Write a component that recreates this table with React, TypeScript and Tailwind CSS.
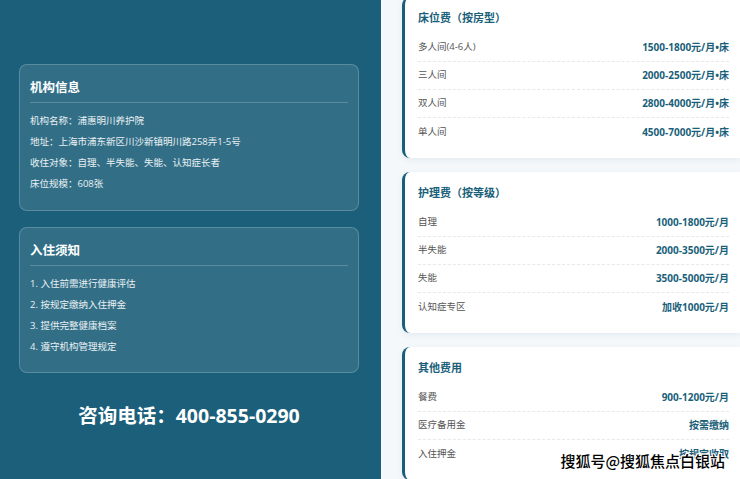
import React from "react";

const font = { fontFamily: '"Open Sans", "Noto Sans CJK SC", sans-serif' };

type Row = [string, string];

function FeeCard({ title, rows, first }: { title: string; rows: Row[]; first?: boolean }) {
  return (
    <div
      className={`bg-white rounded-l-[8px] border-l-[3px] border-[#1a5f7a] pl-[13px] pr-[11px] pt-[14px] pb-[12px] shadow-[0_2px_6px_rgba(26,95,122,0.08)] ${first ? "-mt-[3px]" : ""}`}
    >
      <div className="h-[14px] leading-[14px] text-[11px] font-bold text-[#1a5f7a]">{title}</div>
      <div className="mt-[9px]">
        {rows.map(([l, v], i) => (
          <div
            key={i}
            className={`h-[28px] flex items-center justify-between text-[9.5px] ${i < rows.length - 1 ? "border-b border-dashed border-[#e6e9ec]" : ""}`}
          >
            <span className="text-[#555]">{l}</span>
            <span className="font-bold text-[10px] text-[#1a5f7a]">{v}</span>
          </div>
        ))}
      </div>
    </div>
  );
}

function InfoCard({ title, items, pb }: { title: string; items: string[]; pb: string }) {
  return (
    <div className={`rounded-[8px] bg-white/10 border border-white/20 px-[10px] pt-[13px] ${pb}`}>
      <div className="h-[20px] leading-[20px] text-[12.5px] font-bold text-white border-b border-white/20 pb-[4px] box-content">
        {title}
      </div>
      <div className="mt-[7px]">
        {items.map((t, i) => (
          <div key={i} className="h-[21px] leading-[21px] text-[9.5px] text-white/90">
            {t}
          </div>
        ))}
      </div>
    </div>
  );
}

export default function App() {
  return (
    <div className="w-[740px] h-[479px] overflow-hidden flex relative" style={font}>
      <div className="w-[381px] shrink-0 bg-[#1b5f7a] pl-[19px] pr-[22px] pt-[64px]">
        <InfoCard
          title="机构信息"
          pb="pb-[16px]"
          items={[
            "机构名称：浦惠明川养护院",
            "地址：上海市浦东新区川沙新镇明川路258弄1-5号",
            "收住对象：自理、半失能、失能、认知症长者",
            "床位规模：608张",
          ]}
        />
        <div className="h-[16px]" />
        <InfoCard
          title="入住须知"
          pb="pb-[15px]"
          items={["1. 入住前需进行健康评估", "2. 按规定缴纳入住押金", "3. 提供完整健康档案", "4. 遵守机构管理规定"]}
        />
        <div className="mt-[30px] text-center text-[19.5px] font-bold text-white leading-[25px]">
          咨询电话：400-855-0290
        </div>
      </div>
      <div className="flex-1 bg-[#f4f8fb] pl-[21px] flex flex-col gap-[14px]">
        <FeeCard
          first
          title="床位费（按房型）"
          rows={[
            ["多人间(4-6人)", "1500-1800元/月•床"],
            ["三人间", "2000-2500元/月•床"],
            ["双人间", "2800-4000元/月•床"],
            ["单人间", "4500-7000元/月•床"],
          ]}
        />
        <FeeCard
          title="护理费（按等级）"
          rows={[
            ["自理", "1000-1800元/月"],
            ["半失能", "2000-3500元/月"],
            ["失能", "3500-5000元/月"],
            ["认知症专区", "加收1000元/月"],
          ]}
        />
        <FeeCard
          title="其他费用"
          rows={[
            ["餐费", "900-1200元/月"],
            ["医疗备用金", "按需缴纳"],
            ["入住押金", "按规定收取"],
          ]}
        />
      </div>
      <div
        className="absolute right-[15px] bottom-[8px] text-[15px] font-medium text-black leading-[20px]"
        style={{
          fontFamily: '"Noto Sans CJK SC", sans-serif',
          textShadow:
            "1px 0 0 #fff, -1px 0 0 #fff, 0 1px 0 #fff, 0 -1px 0 #fff, 1px 1px 0 #fff, -1px -1px 0 #fff, 1px -1px 0 #fff, -1px 1px 0 #fff",
        }}
      >
        搜狐号@搜狐焦点白银站
      </div>
    </div>
  );
}
